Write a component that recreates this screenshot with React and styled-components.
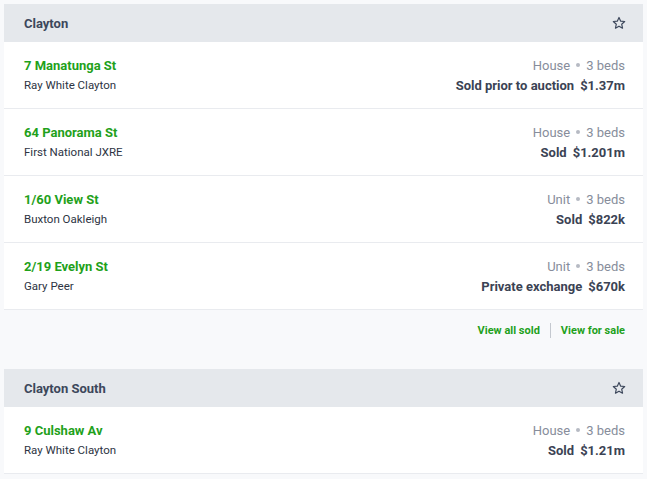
import React from 'react';
import styled, { createGlobalStyle } from 'styled-components';

const GlobalStyle = createGlobalStyle`
  body {
    margin: 0;
    background: #f8f9fb;
    font-family: Roboto, "Noto Sans", sans-serif;
  }
`;

const Page = styled.div`
  display: flex;
  flex-direction: column;
  gap: 19px;
  padding: 4px;
`;

const Suburb = styled.section`
  display: flex;
  flex-direction: column;
`;

const Header = styled.div`
  display: flex;
  justify-content: space-between;
  align-items: center;
  height: 38px;
  padding: 0 20px;
  background: #e5e8ec;
  color: #3c475b;
  font-size: 13px;
  font-weight: 700;
`;

const StarButton = styled.span`
  display: flex;
  color: #3c475b;
  margin-right: -3px;
`;

const Row = styled.div`
  display: flex;
  justify-content: space-between;
  align-items: center;
  height: 66px;
  padding: 0 18px 0 20px;
  background: #fff;
  border-bottom: 1px solid #e9ebef;
`;

const Col = styled.div`
  display: flex;
  flex-direction: column;
  align-items: ${p => (p.$right ? 'flex-end' : 'flex-start')};
  gap: 5px;
`;

const Address = styled.a`
  color: #1fa11b;
  font-size: 13px;
  font-weight: 700;
  text-decoration: none;
`;

const Agent = styled.div`
  color: #2d3443;
  font-size: 11.5px;
`;

const Meta = styled.div`
  display: flex;
  align-items: center;
  color: #878d9b;
  font-size: 13px;
`;

const Dot = styled.span`
  width: 4px;
  height: 4px;
  margin: 0 6px;
  border-radius: 50%;
  background: #b6bac3;
`;

const Price = styled.div`
  display: flex;
  gap: 6px;
  color: #3b4354;
  font-size: 13px;
  font-weight: 700;
`;

const Footer = styled.div`
  display: flex;
  justify-content: flex-end;
  align-items: center;
  height: 39px;
  padding: 1px 18px 0;
`;

const Link = styled.a`
  color: #1fa11b;
  font-size: 11px;
  font-weight: 700;
  text-decoration: none;
`;

const Divider = styled.span`
  width: 1px;
  height: 15px;
  background: #c4c8cf;
  margin: 0 10px;
`;

const Star = () => (
  <svg width="14" height="14" viewBox="0 0 24 24" fill="none" stroke="currentColor" strokeWidth="2" strokeLinejoin="round">
    <path d="M12 2.5l2.9 6.3 6.9.7-5.2 4.6 1.5 6.8L12 17.4l-6.1 3.5 1.5-6.8-5.2-4.6 6.9-.7z" />
  </svg>
);

const suburbs = [
  {
    name: 'Clayton',
    footer: true,
    listings: [
      { address: '7 Manatunga St', agent: 'Ray White Clayton', type: 'House', beds: 3, sale: 'Sold prior to auction', price: '$1.37m' },
      { address: '64 Panorama St', agent: 'First National JXRE', type: 'House', beds: 3, sale: 'Sold', price: '$1.201m' },
      { address: '1/60 View St', agent: 'Buxton Oakleigh', type: 'Unit', beds: 3, sale: 'Sold', price: '$822k' },
      { address: '2/19 Evelyn St', agent: 'Gary Peer', type: 'Unit', beds: 3, sale: 'Private exchange', price: '$670k' },
    ],
  },
  {
    name: 'Clayton South',
    listings: [
      { address: '9 Culshaw Av', agent: 'Ray White Clayton', type: 'House', beds: 3, sale: 'Sold', price: '$1.21m' },
    ],
  },
];

const App = () => (
  <>
    <GlobalStyle />
    <Page>
      {suburbs.map(s => (
        <Suburb key={s.name}>
          <Header>
            {s.name}
            <StarButton><Star /></StarButton>
          </Header>
          {s.listings.map(l => (
            <Row key={l.address}>
              <Col>
                <Address href="#">{l.address}</Address>
                <Agent>{l.agent}</Agent>
              </Col>
              <Col $right>
                <Meta>{l.type}<Dot />{l.beds} beds</Meta>
                <Price><span>{l.sale}</span><span>{l.price}</span></Price>
              </Col>
            </Row>
          ))}
          {s.footer && (
            <Footer>
              <Link href="#">View all sold</Link>
              <Divider />
              <Link href="#">View for sale</Link>
            </Footer>
          )}
        </Suburb>
      ))}
    </Page>
  </>
);

export default App;
